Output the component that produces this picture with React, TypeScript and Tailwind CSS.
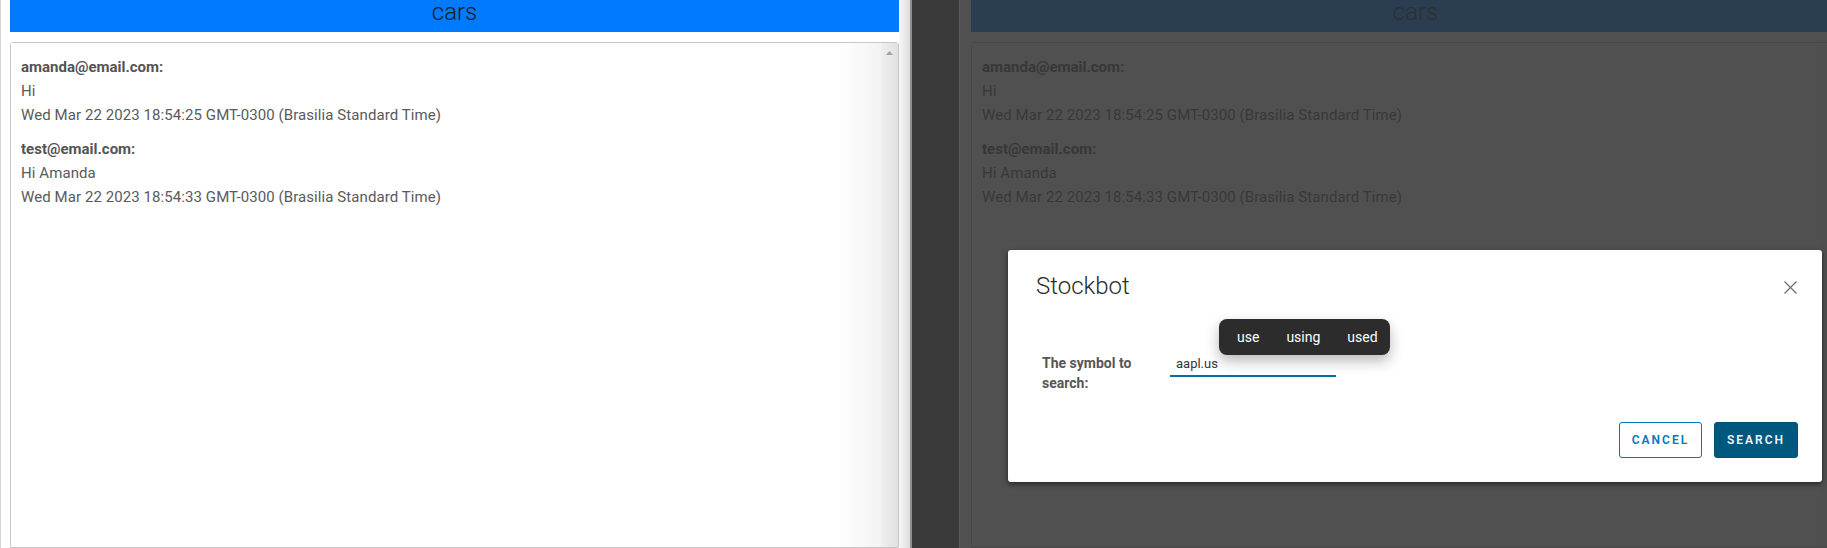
import React from "react";

type Message = {
  author: string;
  text: string;
  date: string;
};

const MESSAGES: Message[] = [
  {
    author: "amanda@email.com:",
    text: "Hi",
    date: "Wed Mar 22 2023 18:54:25 GMT-0300 (Brasilia Standard Time)",
  },
  {
    author: "test@email.com:",
    text: "Hi Amanda",
    date: "Wed Mar 22 2023 18:54:33 GMT-0300 (Brasilia Standard Time)",
  },
];

/** One chat room column: blue title bar and the message box under it */
function ChatRoom() {
  return (
    <div className="flex w-[889px] shrink-0 flex-col">
      <div className="h-[33px] bg-[#007bff] text-center text-[24px] font-light leading-[24px] text-[#1b1b1b]">
        cars
      </div>
      <div className="mt-[10px] flex h-[520px] rounded-t-[3px] border border-[#c6c6c6]">
        <div className="flex-1 bg-linear-to-r from-white from-[95%] to-[#f3f3f3] pl-[10px] pt-[12px]">
          {MESSAGES.map((m, i) => (
            <div key={m.author} className={i > 0 ? "mt-[10px]" : ""}>
              <p className="text-[15px] font-bold leading-[24px] text-[#545454]">{m.author}</p>
              <p className="text-[15px] leading-[24px] tracking-[0.08px] text-[#5a5a5a]">{m.text}</p>
              <p className="text-[15px] leading-[24px] tracking-[0.08px] text-[#5a5a5a]">{m.date}</p>
            </div>
          ))}
        </div>
        {/* scrollbar */}
        <div className="w-[17px] shrink-0 bg-linear-to-r from-[#efefef] to-[#e1e1e1] pl-[5px] pt-[8px]">
          <svg width="7" height="4" viewBox="0 0 7 4">
            <polygon points="3.5,0 7,4 0,4" fill="#a2a2a2" />
          </svg>
        </div>
      </div>
    </div>
  );
}

function CloseIcon() {
  return (
    <svg width="13" height="13" viewBox="0 0 13 13">
      <line x1="0.5" y1="0.5" x2="12.5" y2="12.5" stroke="#707070" strokeWidth="1.2" />
      <line x1="12.5" y1="0.5" x2="0.5" y2="12.5" stroke="#707070" strokeWidth="1.2" />
    </svg>
  );
}

function StockbotModal() {
  return (
    <div className="absolute left-[48px] top-[250px] w-[814px] rounded-[3px] bg-white pb-[24px] pl-[28px] pr-[24px] pt-[22px] shadow-[0_2px_5px_rgba(0,0,0,0.55)]">
      <div className="flex items-center justify-between">
        <h2 className="text-[24px] font-light leading-[28px] text-[#2a2a2a]">Stockbot</h2>
        <button type="button" className="mr-[1px] mt-[2px]" aria-label="Close">
          <CloseIcon />
        </button>
      </div>

      <div className="relative mt-[53px] flex items-start pl-[6px]">
        <label className="w-[128px] text-[14px] font-bold leading-[20px] text-[#565656]">
          The symbol to search:
        </label>
        <div className="h-[24px] w-[166px] border-b-2 border-[#0072a3] pl-[6px] text-[13px] leading-[22px] text-[#333]">
          aapl.us
        </div>

        {/* text suggestions popup */}
        <div className="absolute left-[183px] top-[-34px] flex h-[36px] items-center gap-[27px] rounded-[8px] bg-[#2c2c2c] pl-[18px] pr-[12px] text-[14px] text-white shadow-[0_6px_14px_rgba(0,0,0,0.28)]">
          <span>use</span>
          <span>using</span>
          <span>used</span>
        </div>
      </div>

      <div className="mt-[29px] flex justify-end gap-[12px]">
        <button
          type="button"
          className="h-[36px] w-[83px] rounded-[3px] border border-[#0079b8] bg-white text-[12px] font-semibold tracking-[2px] text-[#0079b8]"
        >
          CANCEL
        </button>
        <button
          type="button"
          className="h-[36px] w-[84px] rounded-[3px] border border-[#004f73] bg-[#00587e] text-[12px] font-semibold tracking-[2px] text-[#eef6fa]"
        >
          SEARCH
        </button>
      </div>
    </div>
  );
}

export default function App() {
  return (
    <div className="flex h-[548px] w-[1827px] overflow-hidden bg-white font-['Roboto',sans-serif]">
      {/* left window */}
      <div className="flex w-[912px] shrink-0 border-l border-[#d4d4d4] bg-white pl-[9px]">
        <ChatRoom />
        <div className="w-[11px] shrink-0 bg-linear-to-r from-[#f7f7f7] to-[#dcdcdc]" />
        <div className="w-[2px] shrink-0 bg-[#8e8e8e]" />
      </div>

      {/* splitter */}
      <div className="w-[48px] shrink-0 border-r border-[#5c5c5c] bg-[#3a3a3a]" />

      {/* right window, with the modal open */}
      <div className="relative flex flex-1 overflow-hidden bg-white pl-[11px]">
        <ChatRoom />
        <div className="absolute inset-0 bg-[rgba(50,50,52,0.855)]" />
        <StockbotModal />
      </div>
    </div>
  );
}
